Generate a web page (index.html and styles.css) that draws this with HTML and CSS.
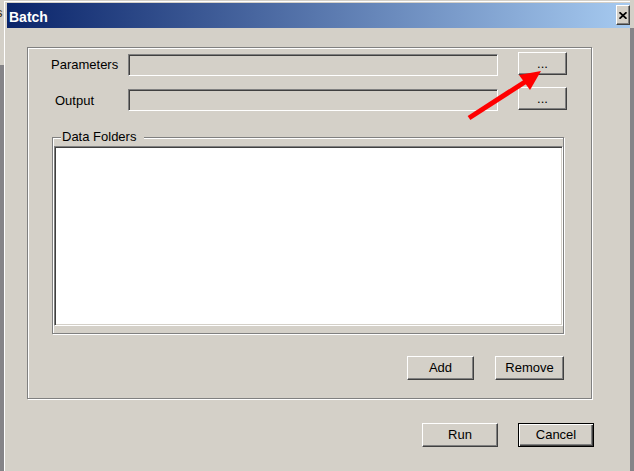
FILE: index.html
```html
<!DOCTYPE html>
<html>
<head>
<meta charset="utf-8">
<title>Batch</title>
<link rel="stylesheet" href="styles.css">
</head>
<body>
<div class="screen">
  <div class="bg-left"><span class="bg-glyph">s</span></div>
  <div class="window">
    <div class="titlebar">
      <span class="title">Batch</span>
      <span class="close">
        <svg width="8" height="7" viewBox="0 0 8 7"><path d="M0.5 0.3 L7.5 6.7 M7.5 0.3 L0.5 6.7" stroke="#000" stroke-width="1.8" fill="none"/></svg>
      </span>
    </div>
    <div class="client">
      <div class="group">
        <div class="row">
          <span class="label label-params">Parameters</span>
          <div class="textbox"></div>
          <button class="btn btn-browse">...</button>
        </div>
        <div class="row row-output">
          <span class="label label-output">Output</span>
          <div class="textbox"></div>
          <button class="btn btn-browse">...</button>
        </div>
        <fieldset class="folders">
          <legend>Data Folders</legend>
          <div class="listbox"></div>
        </fieldset>
        <div class="list-actions">
          <button class="btn btn-add">Add</button>
          <button class="btn btn-remove">Remove</button>
        </div>
      </div>
      <div class="dialog-actions">
        <button class="btn btn-run">Run</button>
        <button class="btn btn-cancel">Cancel</button>
      </div>
    </div>
  </div>
  <div class="bg-right"></div>
  <svg class="annotation" width="634" height="471" viewBox="0 0 634 471">
    <line x1="469" y1="118" x2="528" y2="80" stroke="#ff0000" stroke-width="5"/>
    <polygon points="541,71 519,75 530,90" fill="#ff0000"/>
  </svg>
</div>
</body>
</html>
```
FILE: styles.css
```css
html, body {
  margin: 0;
  padding: 0;
}
body {
  background: #d4d0c8;
  font-family: "Liberation Sans", Arial, sans-serif;
  font-size: 13px;
  color: #000;
}
.screen {
  position: relative;
  width: 634px;
  height: 471px;
  overflow: hidden;
  display: flex;
  background: #d4d0c8;
}
.bg-left {
  width: 4px;
  flex: none;
  overflow: hidden;
  background: linear-gradient(#d4d0c8 0 65px, #858488 65px);
}
.bg-glyph {
  display: block;
  margin: 5px 0 0 -4px;
  font-size: 13px;
  line-height: 16px;
  color: #3a2a10;
}
.window {
  width: 625px;
  flex: none;
  margin-top: 1px;
  padding-top: 1px;
  border-left: 1px solid #fff;
  border-top: 1px solid #fff;
  background: #d4d0c8;
}
.bg-right {
  width: 4px;
  flex: none;
  background: linear-gradient(#d4d0c8 0 28px, #858488 28px);
}
.titlebar {
  height: 25px;
  margin-left: 2px;
  box-sizing: border-box;
  display: flex;
  align-items: flex-start;
  background: linear-gradient(to right, #0a246a, #a6caf0);
}
.title {
  padding: 5px 0 0 2px;
  font-weight: bold;
  font-size: 14px;
  line-height: 18px;
  color: #fff;
}
.close {
  margin: 2px 0 0 auto;
  width: 14px;
  height: 20px;
  box-sizing: border-box;
  display: flex;
  align-items: center;
  justify-content: center;
  background: #d4d0c8;
  border: 1px solid;
  border-color: #fff #404040 #404040 #fff;
  box-shadow: inset -1px -1px 0 #808080;
}
.client {
  padding-top: 19px;
}
.group {
  margin-left: 22px;
  width: 565px;
  height: 352px;
  box-sizing: border-box;
  padding-top: 4px;
  border: 1px solid #808080;
  box-shadow: inset 1px 1px 0 #fff, 1px 1px 0 #fff;
}
.row {
  display: flex;
  align-items: flex-start;
  height: 23px;
}
.row-output {
  margin-top: 12px;
}
.label {
  width: 100px;
  box-sizing: border-box;
  line-height: 16px;
  white-space: nowrap;
}
.label-params {
  padding-left: 23px;
  margin-top: 5px;
}
.label-output {
  padding-left: 27px;
  margin-top: 6px;
}
.textbox {
  width: 370px;
  height: 22px;
  margin-top: 2px;
  box-sizing: border-box;
  background: #d4d0c8;
  border: 1px solid;
  border-color: #808080 #fff #fff #808080;
  box-shadow: inset 1px 1px 0 #404040;
}
.btn {
  box-sizing: border-box;
  margin: 0;
  padding: 0;
  height: 24px;
  font-family: "Liberation Sans", Arial, sans-serif;
  font-size: 13px;
  line-height: 16px;
  color: #000;
  background: #d4d0c8;
  border: 1px solid;
  border-color: #fff #404040 #404040 #fff;
  box-shadow: inset -1px -1px 0 #808080;
  border-radius: 0;
}
.btn-browse {
  width: 49px;
  height: 23px;
  margin-left: 20px;
}
.folders {
  margin: 19px 0 0 24px;
  width: 512px;
  box-sizing: border-box;
  min-width: 0;
  padding: 0 0 7px 0;
  border: 1px solid #808080;
  box-shadow: inset 1px 1px 0 #fff, 1px 1px 0 #fff;
}
.folders legend {
  margin-left: 8px;
  padding: 0 8px 0 1px;
  line-height: 16px;
  background: #d4d0c8;
}
.listbox {
  margin: 1px 0 0 1px;
  width: 509px;
  height: 180px;
  box-sizing: border-box;
  background: #fff;
  border: 1px solid;
  border-color: #808080 #fff #fff #808080;
  box-shadow: inset 1px 1px 0 #404040, inset -1px -1px 0 #d4d0c8;
}
.list-actions {
  display: flex;
  justify-content: flex-end;
  gap: 21px;
  margin: 22px 0 0 24px;
  width: 512px;
}
.btn-add {
  width: 67px;
}
.btn-remove {
  width: 69px;
}
.dialog-actions {
  display: flex;
  justify-content: flex-end;
  gap: 20px;
  margin-top: 24px;
  padding-right: 36px;
}
.btn-run {
  width: 76px;
}
.btn-cancel {
  width: 76px;
  border: 1px solid #000;
  box-shadow: inset 1px 1px 0 #fff, inset -1px -1px 0 #404040, inset -2px -2px 0 #808080;
}
.annotation {
  position: absolute;
  left: 0;
  top: 0;
  pointer-events: none;
}
```
